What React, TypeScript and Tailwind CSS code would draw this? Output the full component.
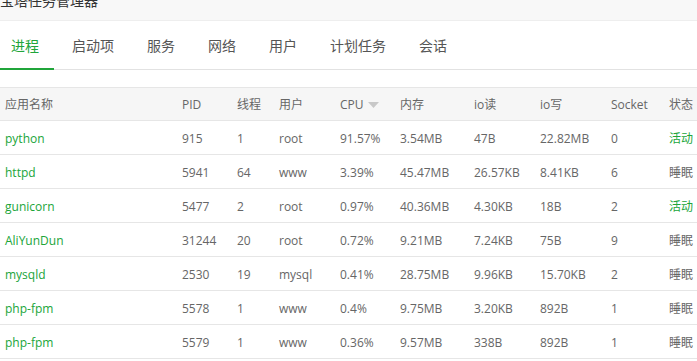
import React from "react";

const font = { fontFamily: '"Open Sans", "Noto Sans CJK SC", sans-serif' };

const cols = [
  { label: "应用名称", w: "w-[177px]" },
  { label: "PID", w: "w-[55px]" },
  { label: "线程", w: "w-[42px]" },
  { label: "用户", w: "w-[61px]" },
  { label: "CPU", w: "w-[60px]" },
  { label: "内存", w: "w-[74px]" },
  { label: "io读", w: "w-[66px]" },
  { label: "io写", w: "w-[71px]" },
  { label: "Socket", w: "w-[58px]" },
  { label: "状态", w: "w-[60px]" },
];

const rows = [
  ["python", "915", "1", "root", "91.57%", "3.54MB", "47B", "22.82MB", "0", "活动"],
  ["httpd", "5941", "64", "www", "3.39%", "45.47MB", "26.57KB", "8.41KB", "6", "睡眠"],
  ["gunicorn", "5477", "2", "root", "0.97%", "40.36MB", "4.30KB", "18B", "2", "活动"],
  ["AliYunDun", "31244", "20", "root", "0.72%", "9.21MB", "7.24KB", "75B", "9", "睡眠"],
  ["mysqld", "2530", "19", "mysql", "0.41%", "28.75MB", "9.96KB", "15.70KB", "2", "睡眠"],
  ["php-fpm", "5578", "1", "www", "0.4%", "9.75MB", "3.20KB", "892B", "1", "睡眠"],
  ["php-fpm", "5579", "1", "www", "0.36%", "9.57MB", "338B", "892B", "1", "睡眠"],
];

const tabs = ["进程", "启动项", "服务", "网络", "用户", "计划任务", "会话"];

export default function App() {
  return (
    <div className="w-[697px] h-[361px] overflow-hidden bg-white text-[#666]" style={font}>
      <div className="h-[21px] bg-[#f8f8f8] border-b border-[#eeeeee] overflow-hidden">
        <div className="-mt-[9px] h-[20px] leading-[20px] text-[14px] text-[#333]">宝塔任务管理器</div>
      </div>
      <div className="h-[49px] flex gap-[7px] border-b border-[#e2e2e2]">
        {tabs.map((t, i) => (
          <div
            key={t}
            className={
              i === 0
                ? "pl-[11px] pr-[15px] h-[49px] leading-[49px] text-[14px] text-[#20a53a] border-b-2 border-[#20a53a] whitespace-nowrap"
                : "pl-[11px] pr-[15px] h-[49px] leading-[49px] text-[14px] text-[#555] whitespace-nowrap"
            }
          >
            {t}
          </div>
        ))}
      </div>
      <div className="h-[17px]" />
      <div className="flex h-[34px] bg-[#f6f6f6] border-t border-b border-[#e6e6e6] text-[12px] whitespace-nowrap">
        {cols.map((c) => (
          <div key={c.label} className={`${c.w} shrink-0 pl-[5px] pt-[2px] flex items-center`}>
            {c.label}
            {c.label === "CPU" && (
              <svg width="11" height="7" viewBox="0 0 11 7" className="ml-[4px]">
                <path d="M0 0 L11 0 L5.5 6 Z" fill="#c8c8c8" />
              </svg>
            )}
          </div>
        ))}
      </div>
      {rows.map((r, ri) => (
        <div key={ri} className="flex h-[34px] border-b border-[#e6e6e6] text-[12px] whitespace-nowrap">
          {r.map((v, ci) => (
            <div
              key={ci}
              className={`${cols[ci].w} shrink-0 pl-[5px] pt-[2px] flex items-center ${
                ci === 0 ? "text-[#20a53a]" : ci === 9 && v === "活动" ? "text-[#20a53a]" : ""
              }`}
            >
              {v}
            </div>
          ))}
        </div>
      ))}
    </div>
  );
}
